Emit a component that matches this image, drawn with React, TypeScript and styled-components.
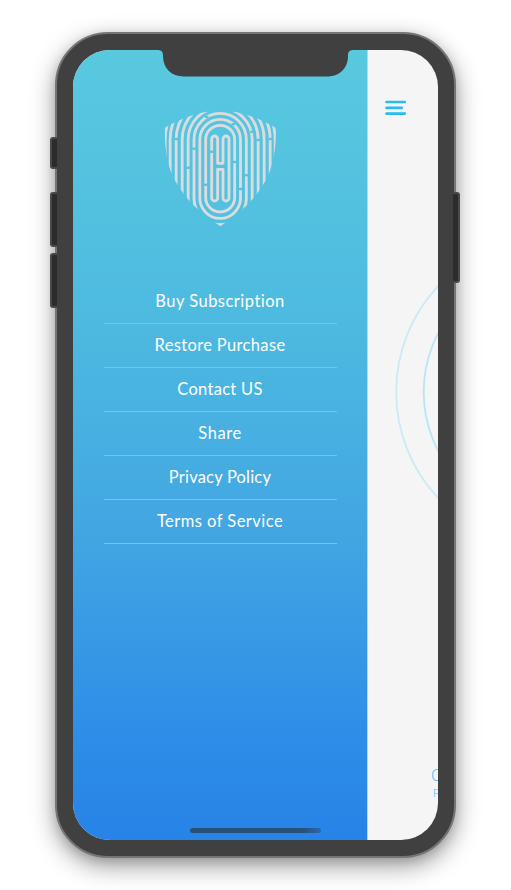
import React from "react";
import styled, { createGlobalStyle } from "styled-components";

const GlobalStyle = createGlobalStyle`
  * { box-sizing: border-box; }
  body { margin: 0; background: #fff; font-family: Lato, "Open Sans", sans-serif; }
`;

const Stage = styled.main`
  width: 511px;
  height: 890px;
  padding: 32px 55px;
  overflow: hidden;
`;

const Phone = styled.div`
  position: relative;
  width: 401px;
  height: 826px;
  padding: 16px;
  border: 2px solid #747676;
  border-radius: 53px;
  background: #404040;
  box-shadow: 0 8px 24px rgba(0, 0, 0, 0.4), 0 3px 10px rgba(0, 0, 0, 0.12);
`;

const SideButton = styled.span<{ $side: "left" | "right"; $top: number; $height: number }>`
  position: absolute;
  z-index: 1;
  ${({ $side }) => $side}: ${({ $side }) => ($side === "left" ? "-7px" : "-6px")};
  top: ${({ $top }) => $top}px;
  width: 7px;
  height: ${({ $height }) => $height}px;
  border: 2px solid #484a4a;
  border-${({ $side }) => ($side === "left" ? "right" : "left")}: 0;
  border-radius: ${({ $side }) => ($side === "left" ? "3px 0 0 3px" : "0 3px 3px 0")};
  background: #2c2c2c;
`;

const Screen = styled.div`
  position: relative;
  display: flex;
  width: 365px;
  height: 790px;
  overflow: hidden;
  border-radius: 37px;
  background: #f5f5f5;
`;

const Notch = styled.svg`
  position: absolute;
  top: 0;
  left: 84px;
  fill: #404040;
`;

const Drawer = styled.aside`
  flex: 0 0 295px;
  display: flex;
  flex-direction: column;
  align-items: center;
  padding-top: 50px;
  border-right: 1px solid #a9dcf0;
  background: linear-gradient(180deg, #59c9df 0%, #4fbde0 29%, #48b1e1 47%, #41a4e3 63%, #2e8de7 87%, #2783e8 100%);
`;

const Logo = styled.svg`
  width: 130px;
  height: 135px;
  flex: none;
`;

const Menu = styled.nav`
  display: flex;
  flex-direction: column;
  width: 233px;
  margin-top: 45px;
`;

const MenuItem = styled.a<{ $spacing: number }>`
  display: flex;
  align-items: center;
  justify-content: center;
  height: 44px;
  padding-bottom: 2px;
  border-bottom: 1px solid #72c5ed;
  color: #fff;
  font-size: 16.5px;
  line-height: 20px;
  letter-spacing: ${({ $spacing }) => $spacing}px;
  white-space: nowrap;
`;

const Content = styled.section`
  position: relative;
  flex: 1;
  display: flex;
  flex-direction: column;
  justify-content: space-between;
  overflow: hidden;
  padding: 50px 0 39px 17px;
`;

const MenuButton = styled.svg`
  width: 22px;
  height: 16px;
`;

const Rings = styled.svg`
  position: absolute;
  top: 186px;
  left: 27px;
  width: 44px;
  height: 312px;
`;

const Status = styled.div`
  display: flex;
  flex-direction: column;
  padding-left: 46px;
  color: #4cc4fa;
  font-family: Roboto, sans-serif;
  font-weight: 300;
`;

const StatusTitle = styled.span`
  font-size: 17px;
  line-height: 17px;
  padding-bottom: 3px;
`;

const StatusNote = styled.span`
  padding-left: 2px;
  font-size: 11px;
  line-height: 14px;
`;

const HomeBar = styled.span`
  position: absolute;
  bottom: 7px;
  left: 117px;
  width: 131px;
  height: 5px;
  border-radius: 3px;
  background: linear-gradient(90deg, #285177 0%, #285177 86%, #2869ae 100%);
`;

const items = [
  { label: "Buy Subscription", spacing: 0.48 },
  { label: "Restore Purchase", spacing: 0.35 },
  { label: "Contact US", spacing: 0.28 },
  { label: "Share", spacing: 0.55 },
  { label: "Privacy Policy", spacing: 0.2 },
  { label: "Terms of Service", spacing: 0.46 },
];

const arches = [96, 114, 132, 150, 165];

const breaks: [number, number][] = [
  [64, 117], [117, 146], [100, 203], [170, 155], [152, 254], [239, 186],
  [257, 267], [274, 226], [310, 120], [291, 95], [346, 117], [235, 73], [155, 51],
];

function FingerprintShield() {
  return (
    <Logo viewBox="0 0 390 405" aria-hidden="true">
      <defs>
        <clipPath id="shield">
          <path d="M29 84C65 62 110 44 150 36L196 33 242 36C282 44 327 62 363 84C363 150 354 208 328 248C292 308 265 325 235 351L196 379 157 351C127 325 100 308 64 248C38 208 29 150 29 84Z" />
        </clipPath>
        <mask id="breaks" maskUnits="userSpaceOnUse" x="0" y="0" width="390" height="405">
          <rect width="390" height="405" fill="#fff" />
          {breaks.map(([x, y]) => (
            <ellipse key={`${x}-${y}`} cx={x} cy={y} rx="6" ry="3.8" fill="#000" />
          ))}
        </mask>
      </defs>
      <g clipPath="url(#shield)" mask="url(#breaks)" fill="none" stroke="#dcdcdf" strokeWidth="8.5" strokeLinejoin="round">
        <rect x="152" y="76" width="87" height="260" rx="43.5" />
        <rect x="134.5" y="58" width="122" height="297" rx="61" />
        <rect x="117" y="40" width="157" height="334" rx="78.5" />
        {arches.map((r) => (
          <path key={r} d={`M${195.5 - r} 340V119A${r} ${r} 0 0 1 ${195.5 + r} 119V340`} />
        ))}
        <path d="M170 190V117a9 9 0 0 1 18 0V190H204V117a9 9 0 0 1 18 0V294a9 9 0 0 1-18 0V208H188V294a9 9 0 0 1-18 0V190" />
      </g>
    </Logo>
  );
}

export default function App() {
  return (
    <>
      <GlobalStyle />
      <Stage>
        <Phone>
          <SideButton $side="left" $top={103} $height={32} />
          <SideButton $side="left" $top={158} $height={55} />
          <SideButton $side="left" $top={219} $height={55} />
          <SideButton $side="right" $top={158} $height={91} />
          <Screen>
            <Drawer>
              <FingerprintShield />
              <Menu>
                {items.map(({ label, spacing }) => (
                  <MenuItem key={label} $spacing={spacing}>{label}</MenuItem>
                ))}
              </Menu>
            </Drawer>
            <Content>
              <Rings viewBox="0 0 44 312" fill="none" stroke="#4ccbf2" strokeWidth="1.8">
                <circle cx="156.2" cy="156" r="155" opacity="0.25" />
                <circle cx="155.7" cy="156" r="127" opacity="0.36" />
              </Rings>
              <MenuButton viewBox="0 0 22 16" stroke="#29bbf3" strokeWidth="2.7" strokeLinecap="round">
                <path d="M1.5 2H19.8M1.5 7.8H16.8M1.5 13.6H19.8" />
              </MenuButton>
              <Status>
                <StatusTitle>C</StatusTitle>
                <StatusNote>F</StatusNote>
              </Status>
            </Content>
            <Notch width="197" height="27" viewBox="0 0 197 27">
              <path d="M0 0C5 0 6 2 6 6C6 18 14 26.500 27 26.500H170C183 26.500 191 18 191 6C191 2 192 0 197 0Z" />
            </Notch>
            <HomeBar />
          </Screen>
        </Phone>
      </Stage>
    </>
  );
}
